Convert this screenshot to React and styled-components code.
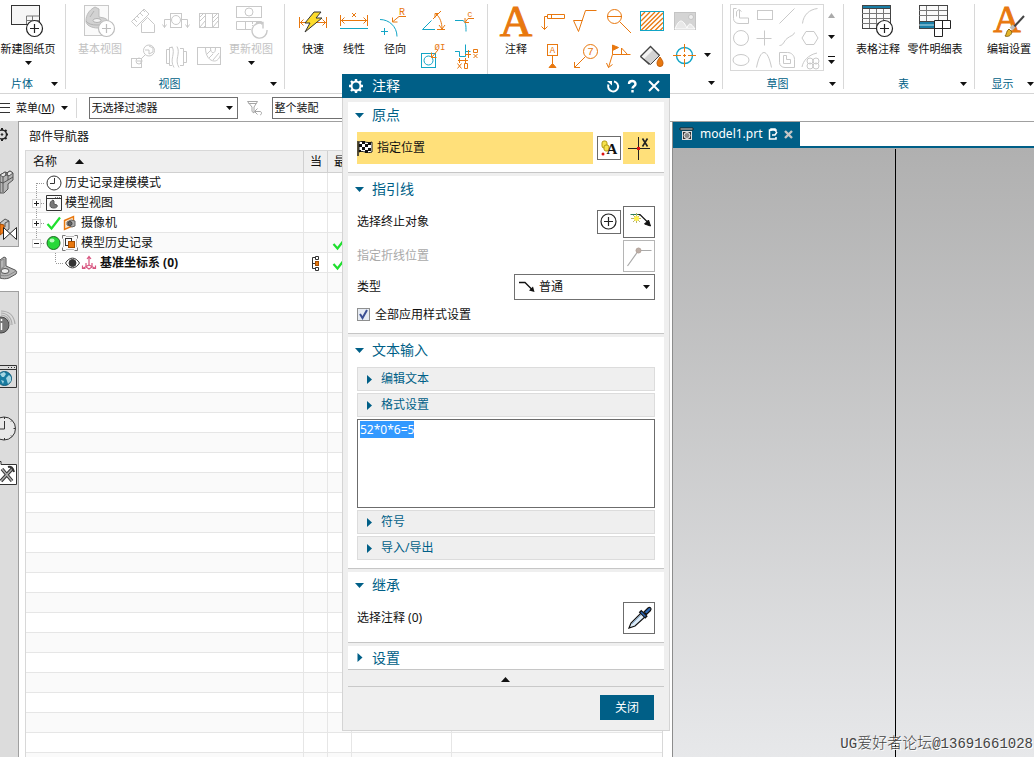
import React, { useEffect, useRef } from 'react'
import styled, { createGlobalStyle, css } from 'styled-components'

const BLUE = '#005f87'
const ORANGE = '#e8780f'
const CYAN = '#12a5c6'
const FADED = '#c9c9c9'
const DARK = '#333'

/* ---------- small shared drawings ---------- */

const Pic = ({ w = 28, h = 28, stroke = FADED, children }) => (
  <svg width={w} height={h} viewBox={`0 0 ${w} ${h}`} fill="none" stroke={stroke} strokeWidth="1" aria-hidden="true">
    {children}
  </svg>
)

const Glyph = ({ x, y, size, fill = ORANGE, family = 'Liberation Mono', children }) => (
  <text x={x} y={y} fontSize={size} fontFamily={family} fill={fill} stroke="none" textAnchor="middle">
    {children}
  </text>
)

const Down = ({ color = '#111' }) => (
  <Pic w={7} h={4}><path d="M0 0h7L3.500 4z" fill={color} stroke="none" /></Pic>
)
const Up = ({ w = 7, color = '#111' }) => (
  <Pic w={w} h={5}><path d={`M0 5h${w}L${w / 2} 0z`} fill={color} stroke="none" /></Pic>
)

const Plus = ({ stroke = '#222' }) => (
  <g stroke={stroke} strokeWidth="1.200">
    <circle cx="23.500" cy="24.500" r="8" fill="#fff" />
    <path d="M19 24.500h9M23.500 20v9" />
  </g>
)

/* ---------- ribbon icons ---------- */

const NewSheet = () => (
  <Pic w={34} h={34} stroke={DARK}>
    <rect x=".5" y="1.500" width="28" height="19" fill="#f6f6f6" />
    <path d="M15.500 20v-8h13M15.500 16.500h13M21.500 12v4" stroke="#777" />
    <Plus />
  </Pic>
)
const BaseView = () => (
  <Pic w={34} h={34}>
    <rect x="1.500" y="1.500" width="24" height="30" fill="#fafafa" />
    <path d="M3 17c0-6 3-11 9-14l4 2v8l5 1c3 1 5 3 5 5 0 3-5 5-11 5-7 0-12-3-12-7z" fill="#d2d2d2" stroke="#bbb" />
    <path d="M3 17c2 3 6 4 11 4s10-1 12-3M7 13l4-6" stroke="#b2b2b2" />
    <ellipse cx="14" cy="16.500" rx="4" ry="2" fill="#f2f2f2" stroke="#b2b2b2" />
    <Plus stroke="#bdbdbd" />
  </Pic>
)
const UpdateView = () => (
  <Pic w={34} h={34}>
    <rect x="2.500" y="2.500" width="25" height="11" />
    <circle cx="15" cy="8" r="4" />
    <path d="M17 25.500H2.500v-8h25v3M11.500 17.500v8" />
    <path d="M11.500 18v7M18.500 18v4" strokeDasharray="2 1" />
    <path d="M29 20a7.500 7.500 0 1 0 4 6M22 18.500h7v6" strokeWidth="1.400" />
  </Pic>
)
const Projected = () => (
  <Pic>
    <path d="M2.500 15.500L15 3l5 5L7.500 20.500zM5 13l3 3M8 10l2 2M11 7l3 3M14 4l2 2" />
    <path d="M12.500 26.500v-9l6-6 7 7v8z" fill="#fff" />
  </Pic>
)
const Section1 = () => (
  <Pic>
    <rect x="8.500" y="7.500" width="11" height="14" />
    <circle cx="14" cy="14" r="4.500" />
    <path d="M9 13.500H2.500v8M19 13.500h6.500v8M.5 18.500l2 3 2-3M23.500 18.500l2 3 2-3" />
  </Pic>
)
const Section2 = () => (
  <Pic>
    <rect x="4.500" y="7.500" width="19" height="14" />
    <path d="M10.500 7v14M17.500 7v14M4 12l5-5M4 16l6-6M5 21l5-6M9 21l1-1M18 12l5-5M18 16l5-5M18 21l5-6" />
  </Pic>
)
const Detail = () => (
  <Pic>
    <rect x="2.500" y="16.500" width="10" height="9" />
    <circle cx="10" cy="19" r="3" />
    <path d="M12 17l4-4M8 19h4v2" />
    <circle cx="20" cy="8.500" r="5.500" />
    <path d="M16 8h4v4l4-2V6l-4-2" />
  </Pic>
)
const BreakView = () => (
  <Pic>
    <path d="M10 5.500H7.500v18H10M4.500 7.500h3M4.500 7.500v14h3M18 6.500h3.500v17H18M21.500 9.500h3v11h-3" />
    <path d="M10 4.500c4 7-3 13 2 21M15 4.500c4 7-3 13 2 21" />
  </Pic>
)
const BreakOut = () => (
  <Pic>
    <rect x="2.500" y="5.500" width="23" height="17" />
    <path d="M10.500 6c0 8 4 13 9 13 3 0 5-3 6-6M15.500 6c0 6 5 7 5 0M12 12l4-4M14 16l4-4M18 18l6-7" />
  </Pic>
)

const Quick = () => (
  <Pic w={34} h={34} stroke={ORANGE}>
    <path d="M3.500 13v11M30.500 13v11M4 18.500h26M7.500 15.500l-3 3 3 3M26.500 15.500l3 3-3 3" />
    <path d="M18 8h7l-5 6h6L9 28l5-9H9z" fill="#fddc2c" stroke="#333" />
  </Pic>
)
const Linear = () => (
  <Pic w={34} h={34} stroke={ORANGE}>
    <path d="M3.500 11v11M30.500 11v11M4 16.500h26M7.500 13.500l-3 3 3 3M26.500 13.500l3 3-3 3M15 9l4 4M19 9l-4 4" />
    <path d="M3 24.500h28" stroke={CYAN} />
  </Pic>
)
const Radial = () => (
  <Pic w={34} h={34} stroke={ORANGE}>
    <path d="M2 15.500c9 0 17 7 17 17M3 27.500h7M6.500 24v7" stroke={CYAN} />
    <path d="M28 12.500h-7l-6 5M14.500 13.500v4.500h5" />
    <Glyph x={24} y={11} size={10}>R</Glyph>
  </Pic>
)
const Angular = () => (
  <Pic stroke={ORANGE}>
    <path d="M16 23.500H3.500l9-9" stroke={CYAN} />
    <path d="M14 13l8-8M18 23.500h8M17 8c4 3 6 9 6 15M16 11.500V7.500h4M20 19l3 4 3-4" />
  </Pic>
)
const Chamfer = () => (
  <Pic stroke={ORANGE}>
    <path d="M2 14.500h8c3 2 3 5 3 11" stroke={CYAN} />
    <path d="M21 12.500h-6l-3 4M12 12v4.500h4" />
    <Glyph x={17} y={11} size={9}>c</Glyph>
  </Pic>
)
const HoleDim = () => (
  <Pic stroke={ORANGE}>
    <rect x="2.500" y="11.500" width="14" height="14" stroke={CYAN} />
    <circle cx="9.500" cy="18.500" r="4.500" stroke={CYAN} />
    <path d="M19 8l-6 7M12.500 10.500v5h5" />
    <Glyph x={21} y={8} size={9}>ØI</Glyph>
  </Pic>
)
const Ordinate = () => (
  <Pic stroke={ORANGE}>
    <path d="M2 9.500h4.500v5h6V2.500M12.500 9.500h5" stroke={CYAN} />
    <path d="M15.500 8v8M12 12.500h6M6.500 16v5M12.500 16v5M5 18.500h10M4.500 21.500l4 5M8.500 21.500l-4 5M11.500 21.500h3v5h-3zM20.500 12l4 4M24.500 12l-4 4M20.500 7.500h4v3h-4z" />
  </Pic>
)

const LetterA = () => (
  <Pic w={34} h={34}><Glyph x={17} y={32} size={45} family="Liberation Serif"><tspan stroke={ORANGE}>A</tspan></Glyph></Pic>
)
const FeatureFrame = () => (
  <Pic stroke={ORANGE}>
    <path d="M8.500 8.500h17v4h-17zM12.500 8.500v4M8 10.500H5.500v13M2.500 20.500l3 3 3-3" />
  </Pic>
)
const Surface = () => (
  <Pic stroke={ORANGE}><path d="M1.500 14.500h9M1.500 14.500l5 11 7-21h11" /></Pic>
)
const Balloon = () => (
  <Pic stroke={ORANGE}><circle cx="9.500" cy="10.500" r="7" /><path d="M2 10.500h15M14.500 15.500L26 27" /></Pic>
)
const Hatch = () => (
  <Pic stroke={ORANGE}>
    <path d="M3 10l4-4M3 15l9-9M3 20l14-14M3 24.500L21.500 6M7 24.500L25 7M12 24.500L25 12M17 24.500l8-8M22 24.500l3-3" strokeWidth="1.300" />
    <rect x="2.500" y="5.500" width="23" height="19" stroke={CYAN} />
  </Pic>
)
const Picture = () => (
  <Pic stroke="#c4c4c4">
    <rect x="3.500" y="6.500" width="21" height="17" fill="#d4d4d4" />
    <circle cx="20" cy="11" r="2.500" fill="#eee" />
    <path d="M4 23c2-5 4-8 6-8s4 3 6 7c1-3 2-4 3-4s3 2 5 5z" fill="#e8e8e8" stroke="#fff" />
  </Pic>
)
const Datum = () => (
  <Pic stroke={ORANGE}>
    <rect x="8.500" y="2.500" width="10" height="11" />
    <path d="M13.500 14v10" />
    <path d="M10 25.500h7l-3.500-4z" fill={ORANGE} />
    <Glyph x={13.5} y={11} size={9}>A</Glyph>
  </Pic>
)
const IdSymbol = () => (
  <Pic stroke={ORANGE}>
    <circle cx="18.500" cy="9.500" r="7" />
    <path d="M13.500 14.500l-11 11M2.500 20v5.500H8" />
    <Glyph x={18.5} y={13} size={11}>7</Glyph>
  </Pic>
)
const Weld = () => (
  <Pic stroke={ORANGE}>
    <path d="M7.500 3v9.500h18M7.500 12.500l-4 13M1.500 21l2 4.500 4-3M16.500 12v-6l6 6.500" />
    <path d="M7.500 3l6 2.500-6 3z" fill={ORANGE} />
  </Pic>
)
const Bucket = () => (
  <Pic stroke="#444">
    <path d="M2.500 14.500l10-10 9 9-9 9z" fill="#d3d3d3" />
    <path d="M2.500 14.500l10-10 3 3-10 10z" fill="#f4f4f4" stroke="none" />
    <path d="M2.500 14.500l10-10 9 9M2.500 14.500l9 8" strokeWidth="1.400" />
    <path d="M22 15c2 3 3 4 3 6.500a3 3 0 0 1-6 0c0-2.500 1-3.500 3-6.500z" fill={ORANGE} stroke="#c55f08" />
  </Pic>
)
const Target = () => (
  <Pic stroke={CYAN}>
    <circle cx="13.500" cy="13.500" r="8" strokeWidth="1.400" />
    <path d="M2 13.500h8M12 13.500h3M17 13.500h8M13.500 2v8M13.500 12v3M13.500 17v8" stroke={ORANGE} />
  </Pic>
)

const SKETCHES = [
  <path d="M5.500 10.500v-5l2.500-2 2.500 2M8.500 4v8h9v5.500H8c-3 0-5.500-2-5.500-5V2.500h3" />,
  <rect x="3.500" y="4.500" width="15" height="9" />,
  <path d="M2.500 17.500l15-15" />,
  <path d="M2.500 17.500c1-9 7-14 15-15" />,
  <circle cx="10" cy="10" r="7.500" />,
  <path d="M2.500 10.500h15M10.500 2.500v15" />,
  <path d="M2.500 17.500c4 0 4-4 7.500-7s7-3 7.500-6" />,
  <path d="M6 3.500h8l4 6.500-4 6.500H6L2 10z" />,
  <ellipse cx="10" cy="10" rx="8" ry="5.500" />,
  <path d="M2.500 17.500c4-20 11-20 15 0" />,
  <path d="M2.500 2.500h8c4 0 7 3 7 7v8H8c-3 0-5.500-2-5.500-5zM6.500 5.500h3v4h4v4h-7z" />,
  <path d="M2 17c1-6 6-12 15-14M7 11a3 3 0 1 0 6 0 3 3 0 1 0-6 0M13 11a3 3 0 1 0 6 0 3 3 0 1 0-6 0M7 16a3 3 0 1 0 6 0 3 3 0 1 0-6 0M13 16a3 3 0 1 0 6 0 3 3 0 1 0-6 0" />,
]

const TableNote = () => (
  <Pic w={34} h={34} stroke="#444">
    <rect x="1.500" y="1.500" width="28" height="23" fill="#fafafa" />
    <path d="M1.500 1.500h28v3h-28z" fill="#1a7ea6" />
    <path d="M1 9.500h28M1 14.500h28M1 19.500h28M8.500 5v19M15.500 5v19M22.500 5v19" stroke="#777" />
    <Plus />
  </Pic>
)
const PartsList = () => (
  <Pic w={34} h={34} stroke="#444">
    <rect x="1.500" y="1.500" width="28" height="23" fill="#fafafa" />
    <path d="M1 6.500h28M1 11.500h28M8.500 2v16M20.500 2v16" stroke="#777" />
    <path d="M1.500 17.500h28v7h-28z" fill="#1a7ea6" />
    <path d="M1 21h28" stroke="#bfe0ea" />
    <path d="M16.500 16.500h16v8h-16zM16.500 24.500h8v8h-8zM24.500 16.500v8" fill="#fff" stroke="#222" />
  </Pic>
)
const EditSettings = () => (
  <Pic w={34} h={34}>
    <Glyph x={15} y={28} size={38} family="Liberation Serif"><tspan stroke={ORANGE}>A</tspan></Glyph>
    <path d="M32 12L20 25" stroke="#444" strokeWidth="2" />
    <path d="M22 22l-3 3" stroke="#bbb" strokeWidth="4" />
    <path d="M13 32c2-2 1-5 4-7l3 3c-1 4-4 5-7 4z" fill="#e3b429" stroke="#8a6914" />
  </Pic>
)

/* ---------- resource bar icons (their left half is off screen) ---------- */

const RailGear = () => (
  <Pic w={18} h={24} stroke="#222">
    <circle cx="2" cy="12.500" r="4.500" strokeWidth="1.400" />
    <circle cx="2" cy="12.500" r=".8" fill="#222" />
    <path d="M2 8V6M5 9.500l1.500-1.500M6.500 12.500H8M5 15.500L6.500 17M2 17v2" strokeWidth="2" />
  </Pic>
)
const RailAssembly = () => (
  <Pic w={18} h={24} stroke="#555">
    <path d="M0 5l5-3 3 1V2l2-1 3 2v7l-5 4v5l-4 4H0z" fill="#b5b5b5" />
    <path d="M0 5l5-3 3 2-5 3zM5 4l5-3 3 2-4 3z" fill="#e6e6e6" />
    <path d="M3 7v6l5-3V5M3 13v9M0 12l3 1M8 10l5-3" />
  </Pic>
)
const RailConstraint = () => (
  <Pic w={18} h={24} stroke="#555">
    <path d="M0 5l5-4 4 2v8l-4 3-5-1z" fill="#c8c8c8" />
    <path d="M5 5l4-2M5 5v4" />
    <path d="M0 6l4 1v7l-4 3z" fill="#f07a18" stroke="#a44d00" />
    <path d="M3.500 9.500l13 12v-12l-13 12z" fill="#fff" stroke="#222" />
  </Pic>
)
const RailPart = () => (
  <Pic w={18} h={24} stroke="#555">
    <path d="M0 3l4-3 2 1v8l9 4c2 1 2 2 1 4l-7 4c-3 1-6 1-9 0z" fill="#b5b5b5" />
    <path d="M0 4l4-2v8l-4 2M16 14l-7 4c-3 1-6 1-9 0" stroke="#888" />
    <ellipse cx="5" cy="14" rx="4" ry="2.500" fill="#eee" />
  </Pic>
)
const RailInfo = () => (
  <Pic w={18} h={32} stroke="#aaa">
    <circle cx="1" cy="18" r="8" fill="#777" stroke="#444" />
    <path d="M1.500 16v7M1.500 12v2" stroke="#fff" strokeWidth="1.500" />
    <path d="M1 8c5 0 9 4 9 10M1 6c6 0 11 5 11 12M1 4c8 0 13 5 14 13" strokeWidth="1.200" />
  </Pic>
)
const RailWeb = () => (
  <Pic w={18} h={32} stroke="#333">
    <path d="M-1 7.500h17.500v22H-1M0 11.500h16" />
    <path d="M8 9.500h1M11 9.500h1M14 9.500h1" />
    <circle cx="4.500" cy="20.500" r="7" fill="#187ba0" stroke="#0d5c7c" />
    <path d="M0 16l4-2 2 2-2 3-2 0zM6 20l3-3 2 2v4l-3 3zM1 22l3 1-1 3z" fill="#a4d5e2" stroke="none" />
  </Pic>
)
const RailClock = () => (
  <Pic w={18} h={32} stroke="#333">
    <circle cx="4" cy="19.500" r="11.500" fill="#e8e8e8" />
    <path d="M4.500 12v8H-1M4.500 8v2M15.500 19.500h-2M4.500 31v-2M12 11.500l-1 1M12 27.500l-1-1" />
  </Pic>
)
const RailTools = () => (
  <Pic w={18} h={32} stroke="#333">
    <path d="M-1 1.500h2v3h15.500v20H-1" fill="#fff" />
    <path d="M2 9l10 12M12 9L1 21" strokeWidth="3.500" />
    <path d="M2 9l10 12M12 9L1 21" stroke="#aaa" strokeWidth="1.500" />
    <path d="M8 7c3-1 5 1 6 5" strokeWidth="2" />
  </Pic>
)

/* ---------- tree icons ---------- */

const dots = { stroke: '#999', strokeDasharray: '1 1' }

const Twig = ({ kind }) => (
  <Pic w={20} h={20}>
    <path d={kind === 'first' ? 'M10.500 10v10M11 10.500h8' : kind === 'last' ? 'M10.500 0v10M11 10.500h8' : 'M10.500 0v20M11 10.500h8'} {...dots} />
    {kind !== 'first' && <rect x="6.500" y="6.500" width="8" height="8" fill="#fff" stroke="#d5d5d5" />}
    {kind !== 'first' && <path d="M8 10.500h5" stroke="#222" />}
    {kind === 'mid' && <path d="M10.500 8v5" stroke="#222" />}
  </Pic>
)
const DeepTwig = () => (
  <Pic w={39} h={20}><path d="M29.500 0v10M30 10.500h8" {...dots} /></Pic>
)
const Clock = () => (
  <Pic w={16} h={16} stroke={DARK}><circle cx="8" cy="8" r="7" /><path d="M8.500 3v5.500H4" /></Pic>
)
const ViewBox = () => (
  <Pic w={16} h={16} stroke={DARK}>
    <path d="M.5.500h15v15H.5zM1 3.500h14" />
    <path d="M9 2.500h1M11 2.500h1M13 2.500h1" stroke="#777" />
    <path d="M4 10c0-3 1-4 3-5l1 1v3l3 1c1 2-1 3-3 3-3 0-4-1-4-3z" fill="#777" stroke="#555" />
  </Pic>
)
const Tick = () => (
  <Pic w={15} h={16} stroke="#1fe02f"><path d="M1.500 9l4 4.500L14 2.500" strokeWidth="2.200" /></Pic>
)
const Camera = () => (
  <Pic w={16} h={16} stroke={ORANGE}>
    <path d="M2.500 5.500l9-4v9l-9 4z" fill="#fbe6cd" strokeWidth="1.400" />
    <path d="M5 7l4-2 4 1v5l-3 1-5-2z" fill="#aaa" stroke="#666" />
    <circle cx="8" cy="8.500" r="2" fill="#666" stroke="#444" />
  </Pic>
)
const Ball = () => (
  <Pic w={15} h={16}>
    <circle cx="7.500" cy="8" r="6.500" fill="#27d838" stroke="#1b6b22" />
    <ellipse cx="6" cy="5.500" rx="2.500" ry="2" fill="#b6f9ba" stroke="none" />
  </Pic>
)
const History = () => (
  <Pic w={16} h={16} stroke={DARK}>
    <path d="M.5 3.500v-3h3M12.500.5h3v3M15.500 12.500v3h-3M3.500 15.500h-3v-3" stroke="#777" />
    <path d="M1.500 4v8M14.500 4v8M4 1.500h8M4 14.500h8" stroke="#bbb" />
    <rect x="3.500" y="3.500" width="6" height="7" />
    <rect x="6.500" y="6.500" width="6" height="6" fill={ORANGE} stroke="#a44d00" />
  </Pic>
)
const Eye = () => (
  <Pic w={15} h={16} stroke={DARK}>
    <path d="M.5 8c4-6.500 10-6.500 14 0-4 6.500-10 6.500-14 0z" fill="#fff" />
    <circle cx="7.500" cy="8" r="3.500" fill="#333" />
  </Pic>
)
const Csys = () => (
  <Pic w={16} h={16} stroke="#d8547f">
    <path d="M8 10V1.500M6 4l2-2.500L10 4M8 10l-6.500 3.500M8 10l6.500 3.500M1.500 10.500v3h3M14.500 10.500v3h-3M5 8v4l3 2 3-2V8" strokeWidth="1.200" />
  </Pic>
)
const Hierarchy = () => (
  <Pic w={9} h={16} stroke={DARK}>
    <path d="M4 2.500H1.500v11H4M1.500 8.500H4M4.500 1.500h3v3h-3zM4.500 12.500h3v3h-3z" />
    <rect x="4.500" y="6.500" width="3" height="4" fill={ORANGE} stroke="#a44d00" />
  </Pic>
)

/* ---------- page ---------- */

const GlobalStyle = createGlobalStyle`
  * { box-sizing: border-box; }
  body {
    margin: 0;
    background: #fff;
    color: #111;
    font: 12px/16px "Noto Sans", "Noto Sans CJK SC", sans-serif;
  }
  button, select, textarea { font: inherit; color: inherit; }
  button { padding: 0; border: 0; background: none; }
  svg { display: block; flex: none; overflow: visible; }
`

const Screen = styled.div`
  position: relative;
  display: flex;
  flex-direction: column;
  height: 100vh;
  overflow: hidden;
`

/* the left part of the window is scrolled out of the screen */
const Ribbon = styled.header`
  display: grid;
  grid-template-columns: 76px 219px 203px 235px 121px 131px 67px;
  height: 94px;
  flex: none;
  margin-left: -10px;
  border-bottom: 1px solid #d5d5d5;
  font-size: 11px;
`
const Group = styled.section`
  display: flex;
  flex-direction: column;
  height: 85px;
  margin-top: 4px;
  border-right: 1px solid #d8d8d8;
`
const Tools = styled.div`
  display: flex;
  flex: none;
  height: 72px;
  gap: ${({ $gap }) => $gap || 4}px;
  padding-left: ${({ $pad }) => $pad}px;
`
const GroupFoot = styled.footer`
  display: flex;
  align-items: center;
  height: 16px;
  padding-right: 7px;
  color: ${BLUE};
  span { flex: 1; margin-right: -3px; text-align: center; }
`
const BigButton = styled.button`
  display: flex;
  flex-direction: column;
  align-items: center;
  min-width: ${({ $wide }) => $wide || 44}px;
  white-space: nowrap;
  color: ${({ disabled }) => (disabled ? '#c2c2c2' : '#111')};
  span { margin: 3px 0 4px; }
`
const IconGrid = styled.div`
  display: grid;
  grid-template-columns: repeat(${({ $cols }) => $cols}, ${({ $cell }) => $cell || 33}px);
  grid-auto-rows: 36px;
  margin-top: -2px;
`
const IconButton = styled.button`
  display: flex;
  align-items: center;
  padding-left: ${({ $pad }) => $pad || 0}px;
`
const Overflow = styled.div`
  display: flex;
  align-items: flex-end;
  padding-bottom: 19px;
`
const Gallery = styled.div`
  display: grid;
  grid-template-columns: repeat(4, 23px);
  grid-template-rows: repeat(3, 22px);
  height: 67px;
  border: 1px solid #d8d8d8;
`
const GallerySteps = styled.div`
  display: flex;
  flex-direction: column;
  justify-content: space-between;
  height: 60px;
  padding: 9px 0 0;
`

const SelectionBar = styled.div`
  display: flex;
  align-items: center;
  flex: none;
  height: 27px;
  font-size: 11px;
`
const MenuButton = styled.button`
  display: flex;
  align-items: center;
  gap: 6px;
  padding-right: 8px;
  margin-right: 12px;
  border-right: 1px solid #d8d8d8;
  height: 20px;
`
const Combo = styled.div`
  position: relative;
  display: flex;
  width: ${({ $width }) => $width}px;
  > svg { position: absolute; pointer-events: none; }
  > svg:last-child { right: 5px; top: ${({ $tall }) => ($tall ? 11 : 9)}px; }
  > svg:first-child { left: 4px; top: 4px; }
  select {
    appearance: none;
    width: 100%;
    height: ${({ $tall }) => ($tall ? 26 : 22)}px;
    padding: 0 ${({ $tall }) => ($tall ? 24 : 2)}px;
    border: 1px solid #707070;
    border-radius: 0;
    background: #fff;
    outline: none;
  }
`
const FilterButton = styled.button`
  margin: 0 9px 0 8px;
`

const Work = styled.main`
  display: flex;
  flex: 1;
  min-height: 0;
`
const Rail = styled.nav`
  display: flex;
  flex-direction: column;
  width: 19px;
  flex: none;
`
const RailPartBox = styled.div`
  display: flex;
  flex-direction: column;
  gap: ${({ $gap }) => $gap}px;
  border-right: 1px solid #a0a0a0;
  background: #dcdcdc;
  ${({ $place }) => $place === 'top' && css`
    padding: 1px 0 4px;
    border-bottom: 1px solid #a0a0a0;
  `}
  ${({ $place }) => $place === 'active' && css`
    padding: 10px 0;
    border-right-color: #fff;
    background: #fff;
  `}
  ${({ $place }) => $place === 'rest' && css`
    flex: 1;
    padding-top: 15px;
    border-top: 1px solid #a0a0a0;
  `}
`
const Navigator = styled.section`
  display: flex;
  flex-direction: column;
  flex: 653;
  min-width: 0;
  overflow: hidden;
  border-top: 1px solid #a0a0a0;
`
const NavTitle = styled.h2`
  flex: none;
  margin: 0;
  padding: 7px 10px 5px;
  font-size: 12px;
  line-height: 16px;
  font-weight: 400;
`
const Tree = styled.table`
  width: calc(100% - 15px);
  margin-left: 6px;
  table-layout: fixed;
  border-collapse: separate;
  border-spacing: 0;
  border: 1px solid #d8d8d8;
  th {
    height: 22px;
    padding: 0 7px;
    border-right: 1px solid #d0d0d0;
    border-bottom: 1px solid #d0d0d0;
    background: #efefef;
    font-weight: 400;
    text-align: left;
    white-space: nowrap;
    overflow: hidden;
  }
  th:not(:first-child) { padding: 0 6px; }
  th svg { display: inline-block; margin-left: 18px; vertical-align: 2px; }
  td {
    height: 20px;
    padding: 0;
    border-right: 1px solid #e6e6e6;
    border-bottom: 1px solid #e6e6e6;
  }
  th:last-child, td:last-child { border-right: 0; }
  tr:nth-child(even) td { background: #fafafa; }
`
const Leaf = styled.div`
  display: flex;
  align-items: center;
  height: 19px;
  gap: 1px;
  font-weight: ${({ $bold }) => ($bold ? 700 : 400)};
  > svg:first-child { margin-right: -1px; }
  span { margin-left: 2px; }
`
const Mark = styled.div`
  display: flex;
  align-items: center;
  height: 19px;
  padding-left: ${({ $pad }) => $pad}px;
`

const Viewer = styled.section`
  display: flex;
  flex-direction: column;
  flex: 361;
  border-top: 1px solid #a0a0a0;
  border-left: 1px solid #8c8c8c;
`
const TabStrip = styled.div`
  display: flex;
  flex: none;
  height: 26px;
  border-bottom: 2px solid ${BLUE};
`
const FileTab = styled.button`
  display: flex;
  align-items: center;
  gap: 6px;
  padding: 0 7px;
  background: ${BLUE};
  color: #fff;
`
const Canvas = styled.div`
  position: relative;
  flex: 1;
  background: linear-gradient(#b0b0b0, #e7e8ea);
`
const DatumLine = styled.i`
  position: absolute;
  top: 1px;
  bottom: 0;
  left: 61.500%;
  width: 1px;
  background: #000;
`
const Watermark = styled.p`
  position: absolute;
  right: 1px;
  bottom: 2px;
  margin: 0;
  color: #444;
  font: 14px/20px "Liberation Mono", "Noto Sans CJK SC", monospace;
  text-shadow: 1px 1px 0 #fff;
  white-space: nowrap;
  span { font-size: 15px; font-weight: 300; }
`

/* ---------- note dialog ---------- */

const Dialog = styled.form`
  position: absolute;
  top: 74px;
  left: 342px;
  width: 328px;
  background: #efefef;
`
const TitleBar = styled.header`
  display: flex;
  align-items: center;
  gap: 8px;
  height: 24px;
  padding: 0 9px 0 6px;
  background: ${BLUE};
  color: #fff;
  h1 { flex: 1; margin: 0; font-size: 14px; font-weight: 400; line-height: 24px; }
`
const DialogBody = styled.div`
  display: flex;
  flex-direction: column;
  gap: 3px;
  padding: 4px 5px 0;
  border: 1px solid #d4d4d4;
  border-top: 0;
`
const Panel = styled.section`
  display: flex;
  flex-direction: column;
  gap: 2px;
  padding: 0 9px ${({ $closed }) => ($closed ? 0 : 8)}px;
  border-bottom: 1px solid #c6c6c6;
  background: #fff;
`
const PanelTitle = styled.button`
  display: flex;
  align-items: center;
  gap: 8px;
  height: ${({ $closed }) => ($closed ? 23 : 26)}px;
  margin: 0 -2px ${({ $closed }) => ($closed ? 0 : 2)}px;
  color: ${BLUE};
  font-size: 14px;
  svg { width: 9px; }
`
const Row = styled.div`
  display: flex;
  align-items: center;
  min-height: ${({ $low }) => ($low ? 26 : 32)}px;
  gap: 2px;
  color: ${({ $off }) => ($off ? '#a9a9a9' : 'inherit')};
  > span, > label { flex: 1; }
`
const Picked = styled.div`
  display: flex;
  align-items: center;
  flex: 1;
  gap: 4px;
  height: 32px;
  margin-right: 2px;
  background: #ffe07a;
`
const ToolButton = styled.button`
  display: flex;
  align-items: center;
  justify-content: center;
  width: ${({ $small }) => ($small ? 24 : 32)}px;
  height: ${({ $small }) => ($small ? 24 : 32)}px;
  border: 1px solid ${({ disabled }) => (disabled ? '#b5b5b5' : '#6c6c6c')};
  background: #fff;
  ${({ $on }) => $on && css`
    border-color: #ffe07a;
    background: #ffe07a;
  `}
`
const CheckRow = styled.label`
  display: flex;
  align-items: center;
  gap: 5px;
  height: 21px;
  margin-top: 2px;
  input {
    appearance: none;
    width: 13px;
    height: 13px;
    margin: 0;
    border: 1px solid #8e8f8f;
    background: #e6ebf3;
  }
  div { position: relative; display: flex; }
  svg { position: absolute; left: 2px; top: 1px; pointer-events: none; }
`
const SubBar = styled.button`
  display: flex;
  align-items: center;
  gap: 9px;
  height: 24px;
  padding-left: 8px;
  border: 1px solid #dcdcdc;
  background: #efefef;
  color: ${BLUE};
`
const NoteText = styled.textarea`
  height: 89px;
  padding: 1px 2px;
  border: 1px solid #6c6c6c;
  border-radius: 0;
  outline: none;
  resize: none;
  line-height: 17px;
  &::selection { background: #3399ff; color: #fff; }
`
const Collapse = styled.button`
  display: flex;
  align-items: center;
  justify-content: center;
  height: 17px;
  margin-top: -3px;
  padding: 2px 1px 0 0;
  border-bottom: 1px solid #c9c9c9;
`
const Actions = styled.footer`
  display: flex;
  justify-content: flex-end;
  padding: 5px 10px 10px;
`
const CloseButton = styled.button`
  width: 54px;
  height: 25px;
  background: ${BLUE};
  color: #fff;
`

const Open = () => <Pic w={9} h={5}><path d="M0 0h9L4.500 5z" fill={BLUE} stroke="none" /></Pic>
const Shut = () => <Pic w={6} h={9}><path d="M1 0v9l5-4.500z" fill={BLUE} stroke="none" /></Pic>

const Heading = ({ closed, children }) => (
  <PanelTitle type="button" $closed={closed} aria-expanded={!closed}>
    {closed ? <Shut /> : <Open />}
    {children}
  </PanelTitle>
)

const Bar = ({ children }) => (
  <SubBar type="button" aria-expanded="false"><Shut />{children}</SubBar>
)

const NoteDialog = () => {
  const note = useRef(null)

  useEffect(() => {
    note.current.focus()
    note.current.select()
  }, [])

  return (
    <Dialog aria-label="注释">
      <TitleBar>
        <Pic w={16} h={16} stroke="#fff">
          <circle cx="8" cy="8" r="4.500" strokeWidth="2" />
          <path d="M8 1v2M8 13v2M1 8h2M13 8h2M3 3l1.500 1.500M11.500 11.500L13 13M3 13l1.500-1.500M11.500 4.500L13 3" strokeWidth="2.400" />
        </Pic>
        <h1>注释</h1>
        <IconButton type="button" aria-label="重置">
          <Pic w={12} h={14} stroke="#fff">
            <path d="M7 2.500a5 5 0 1 1-5.500 3" strokeWidth="2" />
            <path d="M0 2h5v4.500z" fill="#fff" stroke="none" />
          </Pic>
        </IconButton>
        <IconButton type="button" aria-label="帮助">
          <Pic w={10} h={14} stroke="#fff">
            <path d="M2 5c0-4 6.500-4 6.500 0 0 2.500-3 2-3 4.500M5.500 11v2.500" strokeWidth="2.400" />
          </Pic>
        </IconButton>
        <IconButton type="button" aria-label="退出">
          <Pic w={16} h={14} stroke="#fff"><path d="M4 2l10 10M14 2L4 12" strokeWidth="2" /></Pic>
        </IconButton>
      </TitleBar>
      <DialogBody>
        <Panel>
          <Heading>原点</Heading>
          <Row>
            <Picked>
              <Pic w={16} h={16} stroke="#222">
                <path d="M1 1v15" strokeWidth="1.500" />
                <path d="M2 2c4-2 8 2 13 0v10c-5 2-9-2-13 0z" fill="#fff" />
                <path d="M5 1h3v3H5zM11 2h3v3h-3zM2 4h3v3H2zM8 4h3v3H8zM5 7h3v3H5zM11 8h3v3h-3zM8 10h3v3H8zM2 10h2v2H2z" fill="#111" stroke="none" />
              </Pic>
              指定位置
            </Picked>
            <ToolButton type="button" $small aria-label="原点工具">
              <Pic w={18} h={18}>
                <rect x="2" y="2" width="5" height="7" rx="2" fill="#f7e34c" stroke="#b39a12" />
                <rect x="4" y="6" width="5" height="6" rx="2" fill="#f7e34c" stroke="#b39a12" />
                <circle cx="3" cy="15" r="1.500" fill="#d11" stroke="none" />
                <Glyph x={12} y={15} size={15} fill="#111" family="Liberation Serif"><tspan fontWeight="700">A</tspan></Glyph>
              </Pic>
            </ToolButton>
            <ToolButton type="button" $on aria-label="指定位置">
              <Pic w={30} h={30} stroke="#222">
                <path d="M4 15.500h22M14.500 4v23" />
                <path d="M18.500 5.500l5 8M23.500 5.500l-5 8" strokeWidth="1.600" />
                <rect x="13" y="14" width="3" height="3" fill="#d11" stroke="none" />
              </Pic>
            </ToolButton>
          </Row>
        </Panel>

        <Panel>
          <Heading>指引线</Heading>
          <Row>
            <span>选择终止对象</span>
            <ToolButton type="button" $small aria-label="添加">
              <Pic w={18} h={18} stroke="#222"><circle cx="8.500" cy="8.500" r="7.500" strokeWidth="1.200" /><path d="M4 8.500h9M8.500 4v9" strokeWidth="1.200" /></Pic>
            </ToolButton>
            <ToolButton type="button" aria-label="选择终止对象">
              <Pic w={30} h={30} stroke="#111">
                <path d="M12 7.500h4l8 8" strokeWidth="1.200" />
                <path d="M26.500 19l-6-2 4-4z" fill="#111" />
                <path d="M6.500 7.500h8" stroke="#2e7d5b" />
                <path d="M12.500 6v10M7 11.500h10M9 8l7 7M16 8l-7 7" stroke="#b9b56a" />
                <circle cx="12.500" cy="11.500" r="2.500" fill="#fff04a" stroke="none" />
              </Pic>
            </ToolButton>
          </Row>
          <Row $off>
            <span>指定折线位置</span>
            <ToolButton type="button" disabled aria-label="指定折线位置">
              <Pic w={30} h={30} stroke="#aaa">
                <path d="M3.500 25L14.500 9.500h13" strokeWidth="1.200" />
                <circle cx="14.500" cy="9.500" r="2.500" fill="#bdaea6" stroke="#b4a49b" />
              </Pic>
            </ToolButton>
          </Row>
          <Row $low>
            <label htmlFor="leader">类型</label>
            <Combo $tall $width={141}>
              <Pic w={18} h={18} stroke="#111">
                <path d="M1 4.500h6l7 7" strokeWidth="1.300" />
                <path d="M16.500 14l-5.500-1.500 4-4z" fill="#111" stroke="none" />
              </Pic>
              <select id="leader"><option>普通</option></select>
              <Down />
            </Combo>
          </Row>
          <CheckRow>
            <div>
              <input type="checkbox" defaultChecked />
              <Pic w={9} h={10} stroke="#3b4f93"><path d="M1 5l2.500 4L8 1" strokeWidth="2" /></Pic>
            </div>
            全部应用样式设置
          </CheckRow>
        </Panel>

        <Panel>
          <Heading>文本输入</Heading>
          <Bar>编辑文本</Bar>
          <Bar>格式设置</Bar>
          <NoteText ref={note} aria-label="文本输入" spellCheck="false" defaultValue="52*0*6=5" />
          <Bar>符号</Bar>
          <Bar>导入/导出</Bar>
        </Panel>

        <Panel>
          <Heading>继承</Heading>
          <Row>
            <span>选择注释 (0)</span>
            <ToolButton type="button" aria-label="选择注释">
              <Pic w={30} h={30} stroke="#111">
                <path d="M5 25l2-5L18 9l4 4L11 23z" fill="#dcebf8" strokeWidth="1.200" />
                <path d="M20 9l4-4c2-1.500 4 .5 2.500 2.500l-4 4z" fill="#2c69b8" strokeWidth="1.200" />
                <path d="M16 8l6.500 6.500" strokeWidth="3.500" />
                <path d="M17 9l4.500 4.500" stroke="#2c69b8" strokeWidth="1.500" />
                <path d="M8 21l9-9" stroke="#8fb2d4" />
              </Pic>
            </ToolButton>
          </Row>
        </Panel>

        <Panel $closed>
          <Heading closed>设置</Heading>
        </Panel>
        <Collapse type="button" aria-label="折叠"><Up w={9} /></Collapse>
        <Actions>
          <CloseButton type="button">关闭</CloseButton>
        </Actions>
      </DialogBody>
    </Dialog>
  )
}

const Icons = ({ list, cols, cell, disabled }) => (
  <IconGrid $cols={cols} $cell={cell}>
    {list.map((Item, i) => (
      <IconButton key={i} type="button" disabled={disabled} $pad={3}><Item /></IconButton>
    ))}
  </IconGrid>
)

const Big = ({ icon: Icon, label, menu, ...rest }) => (
  <BigButton type="button" {...rest}>
    <Icon />
    <span>{label}</span>
    {menu && <Down />}
  </BigButton>
)

const Foot = ({ children }) => (
  <GroupFoot><span>{children}</span><Down /></GroupFoot>
)

const rows = [
  { name: '历史记录建模模式', lead: <><Twig kind="first" /><Clock /></> },
  { name: '模型视图', lead: <><Twig kind="mid" /><ViewBox /></> },
  { name: '摄像机', lead: <><Twig kind="mid" /><Tick /><Camera /></> },
  { name: '模型历史记录', lead: <><Twig kind="last" /><Ball /><History /></>, done: true },
  { name: '基准坐标系 (0)', lead: <><DeepTwig /><Eye /><Csys /></>, bold: true, done: true, linked: true },
]
const blank = Array.from({ length: 25 }, () => ({}))

const App = () => {
  return (
    <Screen>
      <GlobalStyle />
      <Ribbon>
        <Group>
          <Tools $pad={10}><Big icon={NewSheet} label="新建图纸页" menu $wide={56} /></Tools>
          <Foot>片体</Foot>
        </Group>
        <Group>
          <Tools $pad={12}>
            <Big icon={BaseView} label="基本视图" disabled />
            <Icons cols={3} list={[Projected, Section1, Section2, Detail, BreakView, BreakOut]} disabled />
            <Big icon={UpdateView} label="更新视图" menu disabled />
          </Tools>
          <Foot>视图</Foot>
        </Group>
        <Group>
          <Tools $gap={1} $pad={8}>
            <Big icon={Quick} label="快速" $wide={40} />
            <Big icon={Linear} label="线性" $wide={40} />
            <Big icon={Radial} label="径向" $wide={40} />
            <Icons cols={2} cell={34} list={[Angular, Chamfer, HoleDim, Ordinate]} />
          </Tools>
          <Foot />
        </Group>
        <Group>
          <Tools $gap={3} $pad={11}>
            <Big icon={LetterA} label="注释" $wide={34} />
            <Icons cols={5} list={[FeatureFrame, Surface, Balloon, Hatch, Picture, Datum, IdSymbol, Weld, Bucket, Target]} />
            <Overflow><Down /></Overflow>
          </Tools>
          <Foot />
        </Group>
        <Group>
          <Tools $pad={7}>
            <Gallery>
              {SKETCHES.map((shape, i) => (
                <IconButton key={i} type="button" disabled><Pic w={20} h={20}>{shape}</Pic></IconButton>
              ))}
            </Gallery>
            <GallerySteps>
              <Up color="#aaa" />
              <Down />
              <Pic w={7} h={8} stroke="#111"><path d="M0 .5h7" /><path d="M0 4h7L3.500 8z" fill="#111" stroke="none" /></Pic>
            </GallerySteps>
          </Tools>
          <Foot>草图</Foot>
        </Group>
        <Group>
          <Tools $gap={7} $pad={12}>
            <Big icon={TableNote} label="表格注释" />
            <Big icon={PartsList} label="零件明细表" $wide={56} />
          </Tools>
          <Foot>表</Foot>
        </Group>
        <Group>
          <Tools $pad={12}><Big icon={EditSettings} label="编辑设置" /></Tools>
          <Foot>显示</Foot>
        </Group>
      </Ribbon>

      <SelectionBar>
        <MenuButton type="button">
          <Pic w={10} h={12} stroke={DARK}><path d="M0 1.500h10M0 5.500h10M0 10.500h10" /></Pic>
          <span>菜单(<u>M</u>)</span>
          <Down />
        </MenuButton>
        <Combo $width={149}>
          <select aria-label="选择过滤器"><option>无选择过滤器</option></select>
          <Down />
        </Combo>
        <FilterButton type="button" aria-label="重置过滤器" disabled>
          <Pic w={17} h={16} stroke="#a5a5a5">
            <path d="M1.500 1.500h10L8 7v6l-2-1.500V7zM2.500 3.500h8" />
            <path d="M9 11.500h5c2 0 2 3 0 3.500M11.500 8.500l-3 3 3 3" />
          </Pic>
        </FilterButton>
        <Combo $width={149}>
          <select aria-label="选择范围"><option>整个装配</option></select>
          <Down />
        </Combo>
      </SelectionBar>

      <Work>
        <Rail>
          <RailPartBox $place="top" $gap={24}><RailGear /><RailAssembly /><RailConstraint /></RailPartBox>
          <RailPartBox $place="active"><RailPart /></RailPartBox>
          <RailPartBox $place="rest" $gap={19}><RailInfo /><RailWeb /><RailClock /><RailTools /></RailPartBox>
        </Rail>

        <Navigator>
          <NavTitle>部件导航器</NavTitle>
          <Tree>
            <colgroup>
              <col width="278" /><col width="24" /><col width="24" /><col width="100" /><col />
            </colgroup>
            <thead>
              <tr><th>名称<Up w={9} /></th><th>当</th><th>最</th><th /><th /></tr>
            </thead>
            <tbody>
              {[...rows, ...blank].map((row, i) => (
                <tr key={i}>
                  <td>{row.name && <Leaf $bold={row.bold}>{row.lead}<span>{row.name}</span></Leaf>}</td>
                  <td>{row.linked && <Mark $pad={7}><Hierarchy /></Mark>}</td>
                  <td>{row.done && <Mark $pad={4}><Tick /></Mark>}</td>
                  <td />
                  <td />
                </tr>
              ))}
            </tbody>
          </Tree>
        </Navigator>

        <Viewer>
          <TabStrip>
            <FileTab type="button">
              <Pic w={14} h={14} stroke="#ddd">
                <path d="M0 3V1h13v2z" fill="#ddd" stroke="#222" />
                <rect x="2.500" y="4.500" width="9" height="8" fill="#333" />
                <circle cx="7" cy="8.500" r="3" fill="#888" stroke="#eee" />
              </Pic>
              model1.prt
              <Pic w={10} h={12} stroke="#fff"><path d="M8 9v2H1.500V2H8v2M3 3V1h4v2M4 7h3l2-3" strokeWidth="1.500" /></Pic>
              <Pic w={9} h={9} stroke="#c5c5c5"><path d="M1 1l7 7M8 1L1 8" strokeWidth="2.400" /></Pic>
            </FileTab>
          </TabStrip>
          <Canvas>
            <DatumLine />
            <Watermark>UG<span>爱好者论坛</span>@13691661028</Watermark>
          </Canvas>
        </Viewer>
      </Work>

      <NoteDialog />
    </Screen>
  )
}

export default App
